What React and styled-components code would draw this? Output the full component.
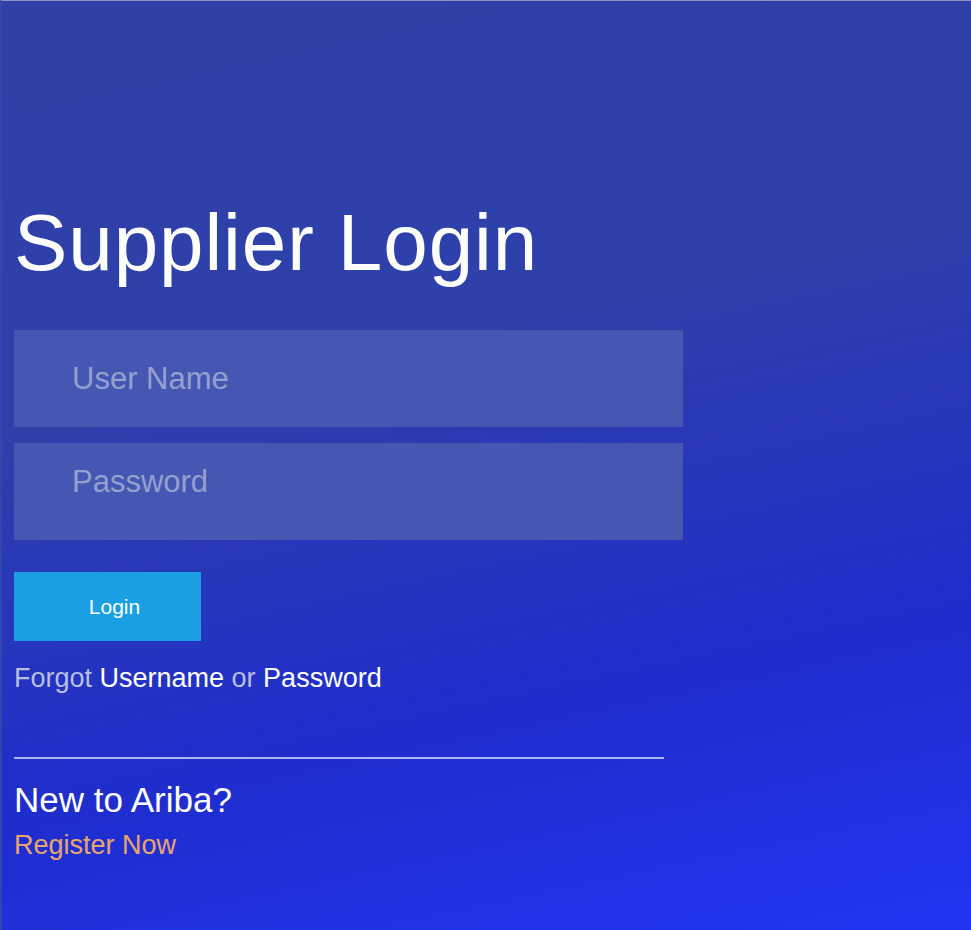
import React from 'react'
import styled, { createGlobalStyle } from 'styled-components'

const GlobalStyle = createGlobalStyle`
  html, body {
    margin: 0;
    padding: 0;
  }
  body {
    font-family: "Liberation Sans", Arial, Helvetica, sans-serif;
  }
`

const Page = styled.div`
  box-sizing: border-box;
  min-height: 930px;
  border-top: 1px solid #8e94c2;
  border-left: 2px solid #3446ad;
  padding: 202px 0 0 12px;
  background: linear-gradient(168deg, #2f41a6 0%, #2e40aa 38%, #1f2dcc 72%, #2136f3 100%);
`

const LoginPanel = styled.div`
  display: flex;
  flex-direction: column;
  width: 669px;
`

const Title = styled.h1`
  margin: 0 0 47px;
  font-size: 80px;
  font-weight: 400;
  line-height: 80px;
  color: #ffffff;
  letter-spacing: 0.9px;
`

const Field = styled.input`
  box-sizing: border-box;
  width: 100%;
  height: 97px;
  margin-bottom: ${({ $last }) => ($last ? '32px' : '16px')};
  padding: 0 0 ${({ $last }) => ($last ? '20px' : '0')} 58px;
  border: none;
  outline: none;
  background: #4656b3;
  font-family: inherit;
  font-size: 31px;
  color: #ffffff;

  &::placeholder {
    color: #95a0cf;
  }
`

const LoginButton = styled.button`
  width: 187px;
  height: 69px;
  border: none;
  padding: 0 0 0 14px;
  background: #1a9fe2;
  color: #ffffff;
  font-family: inherit;
  font-size: 21px;
  cursor: pointer;
`

const ForgotLine = styled.p`
  margin: 22px 0 0;
  font-size: 27px;
  line-height: 30px;
  color: #b9bfe0;
`

const Link = styled.a`
  color: ${({ $accent }) => ($accent ? '#e9a66c' : '#ffffff')};
  text-decoration: none;
`

const Divider = styled.hr`
  width: 650px;
  margin: 64px 0 0;
  border: none;
  height: 2px;
  background: #aab6f2;
`

const NewTitle = styled.h2`
  margin: 22px 0 0;
  font-size: 35px;
  font-weight: 400;
  line-height: 38px;
  color: #ffffff;
`

const Register = styled.div`
  margin-top: 11px;
  font-size: 27px;
  line-height: 30px;
`

export default function App() {
  return (
    <>
      <GlobalStyle />
      <Page>
        <LoginPanel>
          <Title>Supplier Login</Title>
          <Field type="text" placeholder="User Name" />
          <Field type="password" placeholder="Password" $last />
          <LoginButton>Login</LoginButton>
          <ForgotLine>
            Forgot <Link href="#">Username</Link> or <Link href="#">Password</Link>
          </ForgotLine>
          <Divider />
          <NewTitle>New to Ariba?</NewTitle>
          <Register>
            <Link href="#" $accent>Register Now</Link>
          </Register>
        </LoginPanel>
      </Page>
    </>
  )
}
